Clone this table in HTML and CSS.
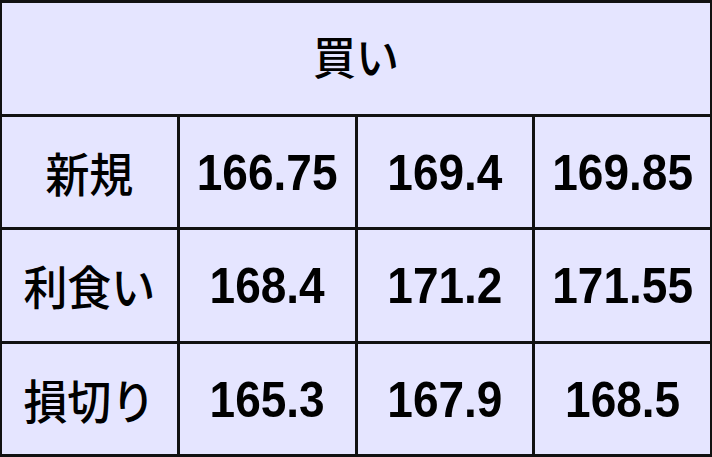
FILE: index.html
```html
<!DOCTYPE html>
<html lang="ja">
<head>
<meta charset="utf-8">
<link rel="stylesheet" href="styles.css">
</head>
<body>
<div class="grid">
  <div class="cell head"><span class="t">買い</span></div>
  <div class="cell label"><span class="t">新規</span></div>
  <div class="cell num"><span class="t">166.75</span></div>
  <div class="cell num"><span class="t">169.4</span></div>
  <div class="cell num"><span class="t">169.85</span></div>
  <div class="cell label"><span class="t">利食い</span></div>
  <div class="cell num"><span class="t">168.4</span></div>
  <div class="cell num"><span class="t">171.2</span></div>
  <div class="cell num"><span class="t">171.55</span></div>
  <div class="cell label"><span class="t">損切り</span></div>
  <div class="cell num"><span class="t">165.3</span></div>
  <div class="cell num"><span class="t">167.9</span></div>
  <div class="cell num"><span class="t">168.5</span></div>
</div>
</body>
</html>
```
FILE: styles.css
```css
html, body {
  margin: 0;
  padding: 0;
  background: #111;
}
.grid {
  width: 712px;
  height: 457px;
  box-sizing: border-box;
  padding: 3px 2px;
  display: grid;
  grid-template-columns: repeat(4, 1fr);
  grid-template-rows: repeat(4, 1fr);
  gap: 3px;
  background: #111;
}
.cell {
  background: #e5e5ff;
  display: flex;
  align-items: center;
  justify-content: center;
  color: #000;
  font-weight: bold;
}
.t {
  display: inline-block;
}
.head {
  grid-column: 1 / 5;
  font-family: "Noto Sans CJK JP", sans-serif;
  font-size: 43px;
  font-weight: 500;
}
.head .t {
  transform: translateY(-3px) scaleY(1.06);
}
.label {
  font-family: "Noto Sans CJK JP", sans-serif;
  font-size: 44px;
  font-weight: 500;
}
.label .t {
  transform: scaleY(1.05);
}
.num {
  font-family: "Liberation Sans", Arial, sans-serif;
  font-size: 46px;
}
.num .t {
  transform: scaleY(1.1);
}
```
